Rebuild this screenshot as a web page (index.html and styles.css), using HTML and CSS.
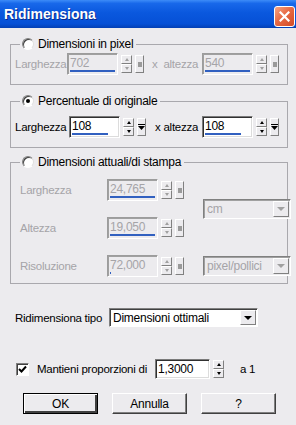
FILE: index.html
```html
<!DOCTYPE html>
<html lang="it">
<head>
  <meta charset="UTF-8">
  <title>Ridimensiona</title>
  <link rel="stylesheet" href="styles.css">
</head>
<body>
  <div class="titlebar">
    <span class="title">Ridimensiona</span>
    <span class="close">
      <svg width="11" height="11" viewBox="0 0 11 11"><path d="M1.5 1.5l8 8M9.5 1.5l-8 8" stroke="#fff" stroke-width="2.2" stroke-linecap="square"/></svg>
    </span>
  </div>

  <div class="dialog">
    <!-- dimensioni in pixel -->
    <fieldset class="group g1 off">
      <legend><span class="radio"></span>Dimensioni in pixel</legend>
      <div class="row">
        <span class="lbl l-larg1">Larghezza</span>
        <span class="spinfield">
          <span class="edit"><span class="val">702</span><span class="bar" style="width:100%"></span></span>
          <span class="spin"><span class="up"></span><span class="down"></span></span>
          <span class="pop"></span>
        </span>
        <span class="lbl l-alt1">x&nbsp;&nbsp;altezza</span>
        <span class="spinfield">
          <span class="edit"><span class="val">540</span><span class="bar" style="width:100%"></span></span>
          <span class="spin"><span class="up"></span><span class="down"></span></span>
          <span class="pop"></span>
        </span>
      </div>
    </fieldset>

    <!-- percentuale -->
    <fieldset class="group g2">
      <legend><span class="radio checked"></span>Percentuale di originale</legend>
      <div class="row">
        <span class="lbl l-larg2">Larghezza</span>
        <span class="spinfield">
          <span class="edit"><span class="val">108</span><span class="bar" style="width:80%"></span></span>
          <span class="spin"><span class="up"></span><span class="down"></span></span>
          <span class="pop"><svg width="7" height="8" viewBox="0 0 7 8"><path d="M0 1.5h7" stroke="#000"/><path d="M0 3h7l-3.5 4z" fill="#000"/></svg></span>
        </span>
        <span class="lbl l-alt2">x altezza</span>
        <span class="spinfield">
          <span class="edit"><span class="val">108</span><span class="bar" style="width:80%"></span></span>
          <span class="spin"><span class="up"></span><span class="down"></span></span>
          <span class="pop"><svg width="7" height="8" viewBox="0 0 7 8"><path d="M0 1.5h7" stroke="#000"/><path d="M0 3h7l-3.5 4z" fill="#000"/></svg></span>
        </span>
      </div>
    </fieldset>

    <!-- dimensioni attuali -->
    <fieldset class="group g3 off">
      <legend><span class="radio"></span>Dimensioni attuali/di stampa</legend>
      <div class="grid">
        <span class="lbl r1">Larghezza</span>
        <span class="spinfield r1">
          <span class="edit"><span class="val">24,765</span><span class="bar" style="width:100%"></span></span>
          <span class="spin"><span class="up"></span><span class="down"></span></span>
          <span class="pop"></span>
        </span>
        <span class="combo unit">
          <span class="ctext">cm</span>
          <span class="arrow"></span>
        </span>

        <span class="lbl r2">Altezza</span>
        <span class="spinfield r2">
          <span class="edit"><span class="val">19,050</span><span class="bar" style="width:100%"></span></span>
          <span class="spin"><span class="up"></span><span class="down"></span></span>
          <span class="pop"></span>
        </span>

        <span class="lbl r3">Risoluzione</span>
        <span class="spinfield r3">
          <span class="edit"><span class="val">72,000</span><span class="bar" style="width:2%"></span></span>
          <span class="spin"><span class="up"></span><span class="down"></span></span>
          <span class="pop"></span>
        </span>
        <span class="combo res r3">
          <span class="ctext">pixel/pollici</span>
          <span class="arrow"></span>
        </span>
      </div>
    </fieldset>

    <div class="tipo">
      <span class="lbl l-tipo">Ridimensiona tipo</span>
      <span class="combo on">
        <span class="ctext">Dimensioni ottimali</span>
        <span class="arrow"></span>
      </span>
    </div>

    <div class="prop">
      <span class="check">
        <svg width="9" height="9" viewBox="0 0 9 9"><path d="M1 4l2.5 2.5L8 1.5" fill="none" stroke="#000" stroke-width="2"/></svg>
      </span>
      <span class="lbl l-prop">Mantieni proporzioni di</span>
      <span class="spinfield">
        <span class="edit wide"><span class="val">1,3000</span></span>
        <span class="spin"><span class="up"></span><span class="down"></span></span>
      </span>
      <span class="lbl l-a1">a 1</span>
    </div>

    <div class="buttons">
      <button class="btn default">OK</button>
      <button class="btn">Annulla</button>
      <button class="btn">?</button>
    </div>
  </div>
</body>
</html>
```

FILE: styles.css
```css
body {
  margin: 0;
  width: 296px;
  height: 425px;
  overflow: hidden;
  background: #ecebee;
  font: 11.5px "Liberation Sans", Arial, sans-serif;
  letter-spacing: -0.25px;
  color: #000;
}

.titlebar {
  height: 28px;
  display: flex;
  justify-content: space-between;
  align-items: flex-start;
  padding: 0 1px 0 4px;
  background: linear-gradient(#3d8cf8 0%, #1868ea 12%, #0a58de 45%, #0650d6 85%, #0440b4 100%);
}
.title {
  margin-top: 6px;
  color: #fff;
  font: bold 14px "Liberation Sans", Arial, sans-serif;
  letter-spacing: 0;
  text-shadow: 1px 1px #0b2a8c;
}
.close {
  margin-top: 6px;
  width: 19px;
  height: 19px;
  border: 1px solid #fff;
  border-radius: 3px;
  background: linear-gradient(135deg, #f5a584 0%, #e86a45 45%, #d24b26 100%);
  display: flex;
  align-items: center;
  justify-content: center;
}

.dialog {
  padding-top: 9px;
}

/* group box */
.group {
  margin: 0 8px 0 10px;
  padding: 0 4px 9px 4px;
  border: 1px solid #a9a8ad;
  min-width: 0;
}
.group legend {
  display: flex;
  align-items: center;
  height: 14px;
  margin-left: 5px;
  padding: 0 3px 0 2px;
  font-size: 12px;
}
.g2 { margin-top: 9px; }
.g3 { margin-top: 7px; padding-bottom: 6px; }

.radio {
  width: 12px;
  height: 12px;
  margin-right: 4px;
  border-radius: 50%;
  background: #fff;
  border: 1px solid;
  border-color: #808080 #e0e0e0 #ffffff #808080;
  box-shadow: inset 1px 1px #404040;
  box-sizing: border-box;
  display: flex;
  align-items: center;
  justify-content: center;
}
.radio.checked::after {
  content: "";
  width: 4px;
  height: 4px;
  border-radius: 50%;
  background: #000;
}

.row {
  display: flex;
  align-items: center;
  height: 22px;
}
.g1 .row { margin-top: 2px; }
.g2 .row { margin-top: 8px; }

.lbl { white-space: nowrap; }
.off .lbl { color: #a5a4a8; }
.l-larg1 { width: 52px; }
.l-alt1 { width: 50px; margin-left: 8px; }
.l-larg2 { width: 54px; }
.l-alt2 { width: 47px; margin-left: 9px; }

/* spin field */
.spinfield {
  display: flex;
  align-items: center;
  height: 22px;
}
.edit {
  width: 51px;
  height: 22px;
  box-sizing: border-box;
  display: flex;
  flex-direction: column;
  background: #fff;
  border: 1px solid;
  border-color: #7a7a7a #ffffff #ffffff #7a7a7a;
  box-shadow: inset 1px 1px #303030, inset -1px -1px #dcdcdc;
  padding: 2px;
}
.edit.wide { width: 55px; height: 20px; }
.val {
  font-size: 12px;
  line-height: 14px;
}
.bar {
  margin-top: auto;
  height: 2px;
  background: #3160c0;
}
.off .edit {
  background: #ecebee;
  border-color: #9c9c9c #ffffff #ffffff #9c9c9c;
  box-shadow: inset 1px 1px #a0a0a0;
}
.off .val { color: #a5a4a8; }

.spin {
  display: flex;
  flex-direction: column;
  width: 11px;
  height: 18px;
  margin-left: 3px;
}
.up, .down {
  flex: 1;
  box-sizing: border-box;
  border: 1px solid;
  border-color: #ffffff #808080 #808080 #ffffff;
  background: #ecebee;
  display: flex;
  align-items: center;
  justify-content: center;
}
.up::after {
  content: "";
  border: 2px solid transparent;
  border-top: 0;
  border-bottom: 3px solid #000;
}
.down::after {
  content: "";
  border: 2px solid transparent;
  border-bottom: 0;
  border-top: 3px solid #000;
}
.off .up::after { border-bottom-color: #a0a0a0; }
.off .down::after { border-top-color: #a0a0a0; }

.pop {
  width: 9px;
  height: 18px;
  margin-left: 3px;
  box-sizing: border-box;
  border: 1px solid;
  border-color: #ffffff #808080 #808080 #ffffff;
  background: #ecebee;
  display: flex;
  align-items: center;
  justify-content: center;
}
.off .pop::after {
  content: "";
  width: 4px;
  height: 5px;
  background: #9a9a9a;
}

/* group 3 grid */
.grid {
  display: grid;
  grid-template-columns: 68px 77px 88px;
  grid-template-rows: 22px 22px 22px;
  column-gap: 19px;
  row-gap: 16px;
  margin-top: 10px;
  padding-left: 5px;
  align-items: center;
}
.r1 { grid-row: 1; }
.r2 { grid-row: 2; }
.r3 { grid-row: 3; }
.grid .combo.unit {
  grid-column: 3;
  grid-row: 1 / span 2;
}
.grid .combo.res {
  grid-column: 3;
}

/* combo */
.combo {
  height: 20px;
  box-sizing: border-box;
  display: flex;
  align-items: center;
  border: 1px solid;
  border-color: #808080 #ffffff #ffffff #808080;
  box-shadow: inset 1px 1px #a0a0a0;
  background: #ecebee;
  padding: 1px 1px 1px 3px;
}
.ctext {
  flex: 1;
  font-size: 12px;
  color: #a5a4a8;
  white-space: nowrap;
}
.arrow {
  width: 16px;
  height: 16px;
  box-sizing: border-box;
  border: 1px solid;
  border-color: #ffffff #808080 #808080 #ffffff;
  background: #ecebee;
  display: flex;
  align-items: center;
  justify-content: center;
}
.arrow::after {
  content: "";
  border: 4px solid transparent;
  border-bottom: 0;
  border-top: 4px solid #a0a0a0;
}
.combo.on {
  width: 149px;
  height: 19px;
  background: #fff;
  box-shadow: inset 1px 1px #404040;
}
.combo.on .ctext { color: #000; }
.combo.on .arrow { height: 15px; }
.combo.on .arrow::after { border-top-color: #000; }

.tipo {
  display: flex;
  align-items: center;
  margin-top: 24px;
  padding-left: 15px;
}
.l-tipo { width: 94px; }

.prop {
  display: flex;
  align-items: center;
  margin-top: 31px;
  padding-left: 16px;
}
.check {
  width: 13px;
  height: 13px;
  box-sizing: border-box;
  background: #fff;
  border: 1px solid;
  border-color: #808080 #ffffff #ffffff #808080;
  box-shadow: inset 1px 1px #404040;
  display: flex;
  align-items: center;
  justify-content: center;
}
.l-prop { width: 118px; margin-left: 8px; }
.prop .edit { padding-top: 2px; }
.l-a1 { margin-left: 16px; }

.buttons {
  display: flex;
  gap: 14px;
  margin-top: 13px;
  padding-left: 23px;
}
.btn {
  width: 75px;
  height: 21px;
  padding: 0;
  background: #ecebee;
  font: 12px "Liberation Sans", Arial, sans-serif;
  letter-spacing: -0.2px;
  color: #000;
  border: 1px solid;
  border-color: #ffffff #404040 #404040 #ffffff;
  box-shadow: inset -1px -1px #808080;
}
.btn.default {
  border: 1px solid #000;
  box-shadow: inset 1px 1px #fff, inset -2px -2px #404040;
}
```
